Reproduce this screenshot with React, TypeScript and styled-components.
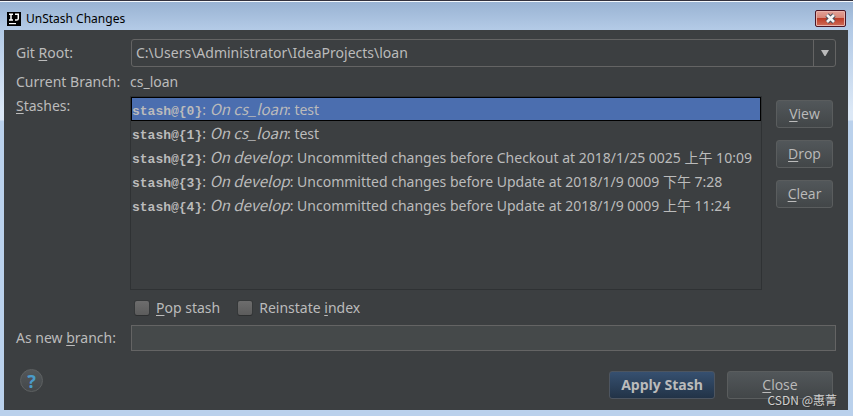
import React, { useState } from "react";
import styled, { createGlobalStyle } from "styled-components";

const uiFont = `"Noto Sans", "Noto Sans CJK SC", sans-serif`;

const GlobalStyle = createGlobalStyle`
  * { box-sizing: border-box; }
  body { margin: 0; font: 14px/20px ${uiFont}; color: #bbbbbb; background: #bad1ec; }
  button, input, select { font: inherit; color: inherit; margin: 0; }
  u { text-decoration: underline; text-underline-offset: 2px; text-decoration-thickness: 1px; }
`;

const Frame = styled.div`
  min-height: 100vh;
  display: flex;
  flex-direction: column;
  padding: 0 5px 6px 4px;
  border-top: 1px solid #33313d;
  box-shadow: inset 0 1px #f4f8fc;
  background: linear-gradient(#98b2d2 0, #b3cae6 28px, #dce8f6 110px, #dce8f6 119px, #bad1ec 120px);
`;

const TitleBar = styled.header`
  display: flex;
  align-items: center;
  gap: 5px;
  height: 29px;
  padding: 6px 2px 0 3px;
`;

const Title = styled.h1`
  flex: 1;
  margin: 0;
  font: 12px/18px "Noto Sans", sans-serif;
  color: #000;
`;

const CloseX = styled.button`
  display: grid;
  place-items: center;
  width: 31px;
  height: 17px;
  padding: 0;
  border: 1px solid #4b1625;
  border-radius: 2px;
  box-shadow: inset 0 0 0 1px #e9b3ab;
  background: linear-gradient(#e3a197 0, #d68577 48%, #bd3c28 50%, #cf6d58 100%);
`;

const Body = styled.main`
  position: relative;
  flex: 1;
  display: flex;
  flex-direction: column;
  padding: 9px 12px 11px;
  background: #3c3f41;
`;

const Form = styled.div`
  display: grid;
  grid-template-columns: 114px minmax(0, 1fr);
  align-items: center;
`;

const Label = styled.label<{ $top?: boolean }>`
  align-self: ${(p) => (p.$top ? "start" : "center")};
  white-space: nowrap;
`;

const SelectBox = styled.div`
  position: relative;
  margin-left: 1px;
`;

const Select = styled.select`
  appearance: none;
  display: block;
  width: 100%;
  height: 28px;
  padding: 0 24px 0 4px;
  border: 1px solid #646464;
  border-radius: 3px;
  background: #3c3f41;
`;

const Arrow = styled.span`
  position: absolute;
  inset: 1px 1px 1px auto;
  width: 22px;
  display: grid;
  place-items: center;
  border-left: 1px solid #646464;
  pointer-events: none;
`;

const Branch = styled.output`
  padding: 5px 0 4px;
`;

const StashArea = styled.div`
  display: flex;
  align-items: flex-start;
  gap: 14px;
  padding-right: 3px;
`;

const List = styled.ul`
  flex: 1;
  min-width: 0;
  min-height: 194px;
  margin: 0;
  padding: 0;
  list-style: none;
  border: 1px solid #2f3234;
  overflow: hidden;
`;

const Item = styled.li<{ $selected: boolean }>`
  display: flex;
  align-items: baseline;
  height: 24px;
  line-height: 22px;
  white-space: pre;
  border: 1px solid ${(p) => (p.$selected ? "#000" : "transparent")};
  background: ${(p) => (p.$selected ? "#4b6eaf" : "transparent")};
`;

const Ref = styled.b`
  font: bold 13px/22px "Liberation Mono", monospace;
`;

const Origin = styled.i`
  font: italic 15px/22px "Noto Sans CJK SC", sans-serif;
`;

const SideButtons = styled.div`
  display: flex;
  flex-direction: column;
  gap: 12px;
  padding-top: 4px;
`;

const Button = styled.button<{ $wide?: boolean; $primary?: boolean }>`
  width: ${(p) => (p.$wide ? "106px" : "57px")};
  height: 28px;
  padding: 0;
  border: 1px solid ${(p) => (p.$primary ? "#4d5560" : "#5a5d5e")};
  border-radius: 3px;
  font-family: "Open Sans", sans-serif;
  font-weight: ${(p) => (p.$primary ? "bold" : "normal")};
  background: ${(p) => (p.$primary ? "linear-gradient(#365070, #223347)" : "linear-gradient(#52575a, #424648)")};
`;

const Checks = styled.div`
  grid-column: 2;
  display: flex;
  gap: 18px;
  padding: 8px 0 7px 5px;
`;

const CheckLabel = styled.label`
  display: flex;
  align-items: center;
  gap: 7px;
`;

const Check = styled.input`
  appearance: none;
  width: 14px;
  height: 14px;
  border-radius: 2px;
  background: linear-gradient(#6d6d6d, #5c5c5c);
  box-shadow: 0 1px #2d2f30, 0 0 0 1px #353839;
  &:checked { background: #4b6eaf; }
`;

const BranchInput = styled.input`
  min-width: 0;
  height: 26px;
  margin-left: 1px;
  padding: 0 4px;
  border: 1px solid #646464;
  background: #45494a;
`;

const Footer = styled.footer`
  display: flex;
  gap: 12px;
  margin-top: auto;
  padding: 0 3px 0 4px;
`;

const Help = styled.button`
  width: 23px;
  height: 23px;
  margin-top: -2px;
  margin-right: auto;
  padding: 0;
  border: 1px solid #5e6162;
  border-radius: 50%;
  font: bold 18px/20px "Noto Sans", sans-serif;
  color: #4a9bc9;
  background: linear-gradient(#53575a, #44484a);
`;

const Watermark = styled.small`
  position: absolute;
  right: 11px;
  bottom: 2px;
  font: 12px/16px "Noto Sans CJK SC", sans-serif;
  color: #d0d0d0;
  text-shadow: 1px 1px #333;
  pointer-events: none;
`;

const stashes = [
  ["cs_loan", "test"],
  ["cs_loan", "test"],
  ["develop", "Uncommitted changes before Checkout at 2018/1/25 0025 上午 10:09"],
  ["develop", "Uncommitted changes before Update at 2018/1/9 0009 下午 7:28"],
  ["develop", "Uncommitted changes before Update at 2018/1/9 0009 上午 11:24"],
];

function Logo() {
  return (
    <svg width="14" height="14" viewBox="0 0 14 14" aria-hidden="true">
      <path fill="#000" d="M0 0h14v14H0z" />
      <path fill="none" stroke="#fff" strokeWidth="1.5" d="M2 2.2h4M4 2v6M2 8h4M8 2.2h3.3v4.2q0 1.6-1.8 1.6H8" />
      <path fill="#fff" d="M2 11h7v1.2H2z" />
    </svg>
  );
}

export default function App() {
  const [selected, setSelected] = useState(0);
  return (
    <>
      <GlobalStyle />
      <Frame>
        <TitleBar>
          <Logo />
          <Title>UnStash Changes</Title>
          <CloseX aria-label="Close window">
            <svg width="13" height="11" viewBox="0 0 13 11" aria-hidden="true">
              <path d="M3 2l7 7M10 2l-7 7" stroke="#4c505c" strokeWidth="4.6" />
              <path d="M3 2l7 7M10 2l-7 7" stroke="#f5f5f5" strokeWidth="2.6" />
            </svg>
          </CloseX>
        </TitleBar>
        <Body>
          <Form>
            <Label htmlFor="root-path">Git <u>R</u>oot:</Label>
            <SelectBox>
              <Select id="root-path">
                <option>C:\Users\Administrator\IdeaProjects\loan</option>
              </Select>
              <Arrow>
                <svg width="8" height="6" viewBox="0 0 8 6" aria-hidden="true">
                  <path d="M0 0h8L4.5 6h-1z" fill="#bbb" />
                </svg>
              </Arrow>
            </SelectBox>
            <Label htmlFor="branch">Current Branch:</Label>
            <Branch id="branch">cs_loan</Branch>
            <Label as="span" id="stashes-label" $top><u>S</u>tashes:</Label>
            <StashArea>
              <List role="listbox" aria-labelledby="stashes-label">
                {stashes.map(([branch, message], i) => (
                  <Item key={i} role="option" aria-selected={i === selected} $selected={i === selected} onClick={() => setSelected(i)}>
                    <Ref>{`stash@{${i}}`}</Ref>
                    <span>: </span>
                    <Origin>{`On ${branch}`}</Origin>
                    <span>{`: ${message}`}</span>
                  </Item>
                ))}
              </List>
              <SideButtons>
                <Button><u>V</u>iew</Button>
                <Button><u>D</u>rop</Button>
                <Button><u>C</u>lear</Button>
              </SideButtons>
            </StashArea>
            <Checks>
              <CheckLabel><Check type="checkbox" /><span><u>P</u>op stash</span></CheckLabel>
              <CheckLabel><Check type="checkbox" /><span>Reinstate <u>i</u>ndex</span></CheckLabel>
            </Checks>
            <Label htmlFor="new-branch">As new <u>b</u>ranch:</Label>
            <BranchInput id="new-branch" type="text" />
          </Form>
          <Footer>
            <Help aria-label="Help">?</Help>
            <Button $wide $primary>Apply Stash</Button>
            <Button $wide><u>C</u>lose</Button>
          </Footer>
          <Watermark>CSDN @惠菁</Watermark>
        </Body>
      </Frame>
    </>
  );
}
